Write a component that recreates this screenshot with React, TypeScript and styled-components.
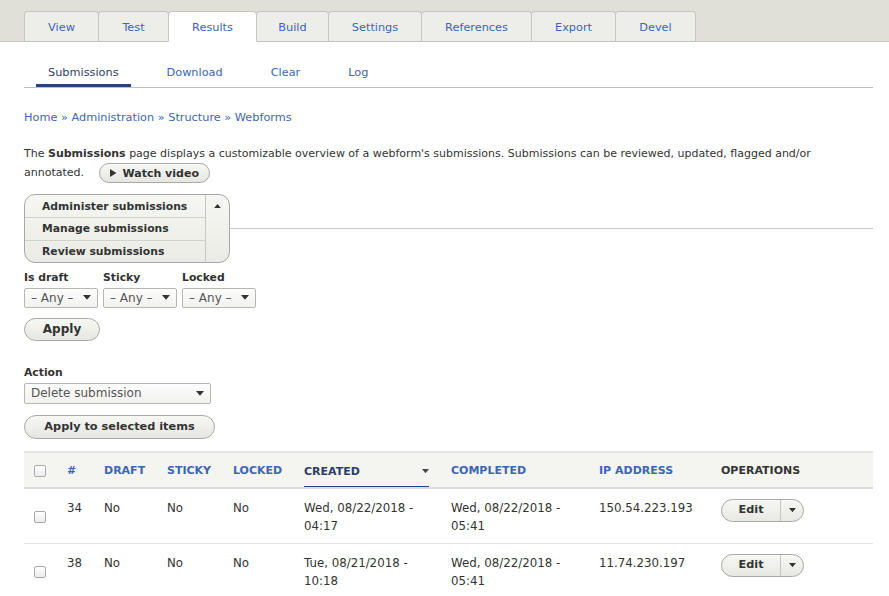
import React from "react";
import styled, { createGlobalStyle, css } from "styled-components";

const GlobalStyle = createGlobalStyle`
  html, body { margin: 0; padding: 0; background: #fff; }
  body {
    font-family: "DejaVu Sans", "Noto Sans", sans-serif;
    font-size: 11.2px;
    color: #333;
    -webkit-font-smoothing: antialiased;
  }
  * { box-sizing: border-box; }
`;

const LINK = "#3c66b5";
const NAVY = "#27457a";

const Page = styled.div`
  width: 889px;
  min-height: 596px;
  overflow: hidden;
`;

const Header = styled.div`
  background: #e0e0d8;
  padding: 11px 0 0 24px;
  border-bottom: 1px solid #c4c4bc;
  display: flex;
`;

const PrimaryTabs = styled.ul`
  display: flex;
  list-style: none;
  margin: 0 0 -1px;
  padding: 0;
`;

const PrimaryTab = styled.li<{ $active?: boolean; $w: number }>`
  width: ${(p) => p.$w}px;
  height: 31px;
  display: flex;
  align-items: center;
  justify-content: center;
  padding-top: 2px;
  color: ${LINK};
  font-size: 11.3px;
  background: #ededea;
  border: 1px solid #c6c6bf;
  border-bottom: 1px solid #c4c4bc;
  margin-right: -1px;
  border-radius: 4px 4px 0 0;
  ${(p) =>
    p.$active &&
    css`
      background: #fff;
      border-bottom-color: #fff;
      position: relative;
      z-index: 1;
    `}
`;

const Content = styled.div`
  padding: 0 16px 0 24px;
`;

const SecondaryTabs = styled.ul`
  display: flex;
  gap: 24px;
  list-style: none;
  margin: 0;
  padding: 16px 0 0 12px;
  border-bottom: 1px solid #c0c0bc;
  height: 46px;
`;

const SecondaryTab = styled.li<{ $active?: boolean }>`
  padding: 8px 12px 0;
  font-size: 11.3px;
  color: ${(p) => (p.$active ? "#2f3e66" : LINK)};
  height: 29px;
  margin-bottom: -1px;
  ${(p) =>
    p.$active &&
    css`
      border-bottom: 3px solid ${NAVY};
    `}
`;

const Breadcrumb = styled.div`
  margin-top: 22px;
  color: ${LINK};
  font-size: 11.3px;
  line-height: 16px;
`;

const Intro = styled.p`
  margin: 18px 0 0;
  font-size: 11px;
  line-height: 19px;
  color: #333;
`;

const pill = css`
  display: inline-flex;
  align-items: center;
  justify-content: center;
  border: 1px solid #a8a8a4;
  border-radius: 20px;
  background: linear-gradient(#f7f7f4, #e6e6e1);
  font-family: inherit;
  font-weight: bold;
  color: #333;
  font-size: 11.3px;
`;

const VideoButton = styled.span`
  ${pill};
  height: 20px;
  width: 111px;
  margin-left: 15px;
  gap: 6px;
  vertical-align: middle;
  font-size: 11px;
`;

const DropRow = styled.div`
  display: flex;
  align-items: center;
  margin-top: 11px;
`;

const DropLine = styled.div`
  flex: 1;
  height: 1px;
  background: #c8c8c4;
`;

const DropButton = styled.div`
  display: flex;
  width: 206px;
  border: 1px solid #a8a8a4;
  border-radius: 11px;
  background: linear-gradient(#f6f6f2, #ebebe6);
  overflow: hidden;
`;

const DropList = styled.div`
  flex: 1;
  display: flex;
  flex-direction: column;
`;

const DropItem = styled.div`
  height: 22.3px;
  display: flex;
  align-items: center;
  padding-left: 17px;
  font-weight: bold;
  font-size: 10.8px;
  color: #333;
  & + & {
    border-top: 1px solid #d2d2cd;
  }
`;

const DropToggle = styled.div`
  width: 24px;
  border-left: 1px solid #c8c8c3;
  display: flex;
  justify-content: center;
  padding-top: 9px;
`;

const Filters = styled.div`
  display: flex;
  gap: 5px;
  margin-top: 8px;
`;

const Field = styled.div`
  display: flex;
  flex-direction: column;
`;

const Label = styled.label`
  font-weight: bold;
  font-size: 10.8px;
  line-height: 14px;
  height: 17px;
  color: #333;
`;

const Select = styled.div<{ $w: number; $h?: number }>`
  width: ${(p) => p.$w}px;
  height: ${(p) => p.$h ?? 21}px;
  border: 1px solid #b6b6b2;
  border-radius: 2px;
  background: linear-gradient(#fdfdfd, #f1f1ef);
  display: flex;
  align-items: center;
  justify-content: space-between;
  padding: 0 6px 0 6px;
  font-size: 12px;
  color: #555;
`;

const Button = styled.div<{ $w: number; $h: number }>`
  ${pill};
  width: ${(p) => p.$w}px;
  height: ${(p) => p.$h}px;
`;

const ApplyButton = styled(Button)`
  font-size: 12px;
`;

const ApplyWrap = styled.div`
  margin-top: 10px;
`;

const ActionBlock = styled.div`
  margin-top: 25px;
  display: flex;
  flex-direction: column;
`;

const SubmitWrap = styled.div`
  margin-top: 11px;
`;

const Table = styled.table`
  margin-top: 12px;
  width: 849px;
  border-collapse: collapse;
  table-layout: fixed;
`;

const HeadRow = styled.tr`
  background: #f4f4f0;
  border-top: 2px solid #e4e4e0;
  border-bottom: 2px solid #dcdcd8;
`;

const Th = styled.th<{ $tone?: "link" | "active" | "plain" }>`
  height: 35px;
  text-align: left;
  padding: 1px 0 0 10px;
  font-size: 11px;
  font-weight: bold;
  text-transform: uppercase;
  vertical-align: middle;
  color: ${(p) =>
    p.$tone === "active" ? "#2a3e6b" : p.$tone === "plain" ? "#333" : LINK};
`;

const SortCell = styled.div`
  display: flex;
  justify-content: space-between;
  align-items: center;
  height: 35px;
  margin-right: 12px;
  border-bottom: 3px solid ${NAVY};
  margin-bottom: -2px;
  padding-top: 3px;
`;

const Row = styled.tr`
  border-bottom: 1px solid #e4e4e0;
`;

const Td = styled.td<{ $mid?: boolean }>`
  padding: 10px 0 8px 10px;
  vertical-align: ${(p) => (p.$mid ? "middle" : "top")};
  font-size: 11.8px;
  line-height: 18px;
  color: #333;
`;

const Check = styled.span`
  display: inline-block;
  width: 12px;
  height: 12px;
  border: 1px solid #aaa;
  border-radius: 2px;
  background: linear-gradient(#fff, #ececec);
  vertical-align: middle;
`;

const OpButton = styled.div`
  display: inline-flex;
  height: 23px;
  border: 1px solid #a8a8a4;
  border-radius: 12px;
  background: linear-gradient(#f7f7f4, #e8e8e3);
  overflow: hidden;
`;

const OpMain = styled.span`
  width: 58px;
  display: flex;
  align-items: center;
  justify-content: center;
  font-weight: bold;
  font-size: 11.3px;
  color: #333;
`;

const OpToggle = styled.span`
  width: 23px;
  border-left: 1px solid #c6c6c1;
  display: flex;
  align-items: center;
  justify-content: center;
`;

type Dir = "up" | "down" | "right";

const Tri = ({ dir = "down", size = 7, color = "#333" }: { dir?: Dir; size?: number; color?: string }) => {
  if (dir === "right") {
    return (
      <svg width={size * 0.8} height={size} viewBox="0 0 8 10">
        <path d="M0 0 L8 5 L0 10 Z" fill={color} />
      </svg>
    );
  }
  return (
    <svg width={size} height={size * 0.6} viewBox="0 0 10 6">
      <path d={dir === "up" ? "M0 6 L5 0 L10 6 Z" : "M0 0 L10 0 L5 6 Z"} fill={color} />
    </svg>
  );
};

const tabs = [
  ["View", 75],
  ["Test", 71],
  ["Results", 89],
  ["Build", 73],
  ["Settings", 94],
  ["References", 111],
  ["Export", 85],
  ["Devel", 81],
] as const;

const rows = [
  { id: "34", created: ["Wed, 08/22/2018 -", "04:17"], completed: ["Wed, 08/22/2018 -", "05:41"], ip: "150.54.223.193" },
  { id: "38", created: ["Tue, 08/21/2018 -", "10:18"], completed: ["Wed, 08/22/2018 -", "05:41"], ip: "11.74.230.197" },
];

export default function App() {
  return (
    <Page>
      <GlobalStyle />
      <Header>
        <PrimaryTabs>
          {tabs.map(([t, w]) => (
            <PrimaryTab key={t} $w={w} $active={t === "Results"}>
              {t}
            </PrimaryTab>
          ))}
        </PrimaryTabs>
      </Header>
      <Content>
        <SecondaryTabs>
          <SecondaryTab $active>Submissions</SecondaryTab>
          <SecondaryTab>Download</SecondaryTab>
          <SecondaryTab>Clear</SecondaryTab>
          <SecondaryTab>Log</SecondaryTab>
        </SecondaryTabs>
        <Breadcrumb>Home » Administration » Structure » Webforms</Breadcrumb>
        <Intro>
          The <b>Submissions</b> page displays a customizable overview of a webform's submissions. Submissions can be
          reviewed, updated, flagged and/or annotated.
          <VideoButton>
            <Tri dir="right" size={8} />
            Watch video
          </VideoButton>
        </Intro>
        <DropRow>
          <DropButton>
            <DropList>
              <DropItem>Administer submissions</DropItem>
              <DropItem>Manage submissions</DropItem>
              <DropItem>Review submissions</DropItem>
            </DropList>
            <DropToggle>
              <Tri dir="up" size={7} />
            </DropToggle>
          </DropButton>
          <DropLine />
        </DropRow>
        <Filters>
          {["Is draft", "Sticky", "Locked"].map((l) => (
            <Field key={l}>
              <Label>{l}</Label>
              <Select $w={74} $h={20}>
                <span>– Any –</span>
                <Tri size={8} />
              </Select>
            </Field>
          ))}
        </Filters>
        <ApplyWrap>
          <ApplyButton $w={76} $h={23}>Apply</ApplyButton>
        </ApplyWrap>
        <ActionBlock>
          <Label>Action</Label>
          <Select $w={187}>
            <span>Delete submission</span>
            <Tri size={8} />
          </Select>
        </ActionBlock>
        <SubmitWrap>
          <Button $w={191} $h={24}>Apply to selected items</Button>
        </SubmitWrap>
        <Table>
          <colgroup>
            <col style={{ width: 33 }} />
            <col style={{ width: 37 }} />
            <col style={{ width: 63 }} />
            <col style={{ width: 66 }} />
            <col style={{ width: 71 }} />
            <col style={{ width: 147 }} />
            <col style={{ width: 148 }} />
            <col style={{ width: 122 }} />
            <col style={{ width: 162 }} />
          </colgroup>
          <thead>
            <HeadRow>
              <Th><Check /></Th>
              <Th>#</Th>
              <Th>Draft</Th>
              <Th>Sticky</Th>
              <Th>Locked</Th>
              <Th $tone="active">
                <SortCell>
                  <span>Created</span>
                  <Tri size={7} color="#445" />
                </SortCell>
              </Th>
              <Th>Completed</Th>
              <Th>IP Address</Th>
              <Th $tone="plain">Operations</Th>
            </HeadRow>
          </thead>
          <tbody>
            {rows.map((r) => (
              <Row key={r.id}>
                <Td $mid><Check /></Td>
                <Td>{r.id}</Td>
                <Td>No</Td>
                <Td>No</Td>
                <Td>No</Td>
                <Td>{r.created[0]}<br />{r.created[1]}</Td>
                <Td>{r.completed[0]}<br />{r.completed[1]}</Td>
                <Td>{r.ip}</Td>
                <Td>
                  <OpButton>
                    <OpMain>Edit</OpMain>
                    <OpToggle><Tri size={7} /></OpToggle>
                  </OpButton>
                </Td>
              </Row>
            ))}
          </tbody>
        </Table>
      </Content>
    </Page>
  );
}
